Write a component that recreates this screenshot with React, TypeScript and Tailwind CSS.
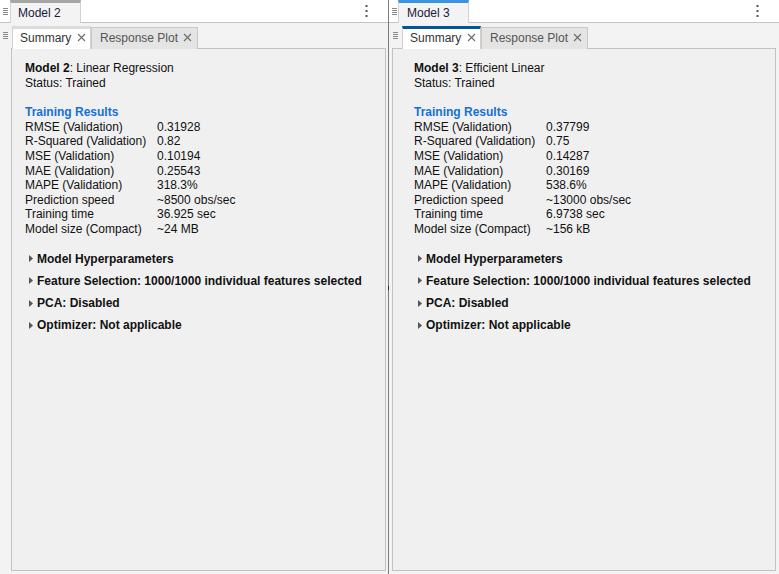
import React from 'react';

interface Pane {
  model: string;
  kind: string;
  rows: [string, string][];
  active: boolean;
}

const panes: Pane[] = [
  {
    model: 'Model 2',
    kind: 'Linear Regression',
    active: false,
    rows: [
      ['RMSE (Validation)', '0.31928'],
      ['R-Squared (Validation)', '0.82'],
      ['MSE (Validation)', '0.10194'],
      ['MAE (Validation)', '0.25543'],
      ['MAPE (Validation)', '318.3%'],
      ['Prediction speed', '~8500 obs/sec'],
      ['Training time', '36.925 sec'],
      ['Model size (Compact)', '~24 MB'],
    ],
  },
  {
    model: 'Model 3',
    kind: 'Efficient Linear',
    active: true,
    rows: [
      ['RMSE (Validation)', '0.37799'],
      ['R-Squared (Validation)', '0.75'],
      ['MSE (Validation)', '0.14287'],
      ['MAE (Validation)', '0.30169'],
      ['MAPE (Validation)', '538.6%'],
      ['Prediction speed', '~13000 obs/sec'],
      ['Training time', '6.9738 sec'],
      ['Model size (Compact)', '~156 kB'],
    ],
  },
];

const sections = [
  'Model Hyperparameters',
  'Feature Selection: 1000/1000 individual features selected',
  'PCA: Disabled',
  'Optimizer: Not applicable',
];

function Grip() {
  return (
    <svg width="5" height="7" viewBox="0 0 5 7" className="shrink-0">
      <rect x="0" y="0" width="5" height="1" fill="#8a8a8a" />
      <rect x="0" y="2" width="5" height="1" fill="#8a8a8a" />
      <rect x="0" y="4" width="5" height="1" fill="#8a8a8a" />
      <rect x="0" y="6" width="5" height="1" fill="#8a8a8a" />
    </svg>
  );
}

function Kebab() {
  return (
    <svg width="3" height="12" viewBox="0 0 3 12">
      <rect x="0.5" y="0" width="2" height="2" fill="#555" />
      <rect x="0.5" y="5" width="2" height="2" fill="#555" />
      <rect x="0.5" y="10" width="2" height="2" fill="#555" />
    </svg>
  );
}

function Close() {
  return (
    <svg width="9" height="9" viewBox="0 0 9 9" className="shrink-0">
      <path d="M1 1 L8 8 M8 1 L1 8" stroke="#6b6b6b" strokeWidth="1.1" />
    </svg>
  );
}

function Caret() {
  return (
    <svg width="4" height="7" viewBox="0 0 4 7" className="shrink-0">
      <path d="M0 0 L4 3.5 L0 7 Z" fill="#555" />
    </svg>
  );
}

function ModelPane({ pane }: { pane: Pane }) {
  const left = !pane.active;
  return (
    <div className={`flex flex-col h-full ${left ? 'w-[388px]' : 'flex-1'}`}>
      {/* document tab strip */}
      <div className="h-[23px] bg-white border-b border-[#c4c4c4] flex items-end relative shrink-0">
        <div className="absolute top-[8px] left-[3px]">
          <Grip />
        </div>
        <div
          className={`h-[23px] -mb-px bg-[#f3f3f3] border-x border-[#d2d2d2] border-t-[3px] flex items-center text-[12px] text-[#1a1a40] ${
            pane.active ? 'ml-[9px] w-[71px] pl-[8px] border-t-[#3b94e0]' : 'ml-[10px] w-[71px] pl-[7px] border-t-[#a6a6a6]'
          }`}
        >
          {pane.model}
        </div>
        <div className="absolute top-[5px] right-[20px]">
          <Kebab />
        </div>
      </div>

      <div className="flex-1 bg-[#f3f3f3] flex flex-col">
        {/* sub tabs */}
        <div className={`h-[25px] flex items-end relative shrink-0 ${left ? 'pl-[12px]' : 'pl-[13px]'}`}>
          <div className={`absolute top-[9px] ${left ? 'left-[3px]' : 'left-[4px]'}`}>
            <Grip />
          </div>
          <div
            className={`h-[23px] w-[79px] -mb-px z-10 bg-white border-x border-[#d0d0d0] border-t-[3px] flex items-center gap-[6px] pl-[7px] pb-[3px] text-[12px] text-[#333] ${
              pane.active ? 'border-t-[#00569b]' : 'border-t-[#dcdcdc]'
            }`}
          >
            Summary
            <Close />
          </div>
          <div className="h-[22px] w-[107px] -mb-px bg-[#e4e4e4] border border-[#c8c8c8] border-b-0 flex items-center gap-[5px] pl-[8px] pb-[2px] text-[12px] text-[#555]">
            Response Plot
            <Close />
          </div>
        </div>

        {/* summary body */}
        <div
          className={`flex-1 mb-[3px] bg-[#f0f0f0] border border-[#c2c2c2] pt-[12px] text-[12px] leading-[14.6px] text-[#111] ${
            left ? 'ml-[11px] mr-[2px] pl-[13px]' : 'ml-[3px] mr-[3px] pl-[21px]'
          }`}
        >
          <div>
            <span className="font-bold">{pane.model}</span>: {pane.kind}
          </div>
          <div>Status: Trained</div>
          <div className="mt-[15px] font-bold text-[#1470d6]">Training Results</div>
          {pane.rows.map(([k, v]) => (
            <div key={k} className="flex">
              <span className="w-[132px] shrink-0">{k}</span>
              <span>{v}</span>
            </div>
          ))}
          <div className="mt-[15px] flex flex-col gap-[7.5px] pl-[4px]">
            {sections.map((s) => (
              <div key={s} className="flex items-center gap-[4px] font-bold text-[#111]">
                <Caret />
                {s}
              </div>
            ))}
          </div>
        </div>
      </div>
    </div>
  );
}

export default function App() {
  return (
    <div
      className="w-[779px] h-[574px] flex bg-white overflow-hidden"
      style={{ fontFamily: '"Liberation Sans", Arial, sans-serif' }}
    >
      <ModelPane pane={panes[0]} />
      <div className="w-px bg-[#7c7c7c] relative">
        <div className="absolute left-0 top-[286px] w-px h-[4px] bg-[#222]" />
      </div>
      <ModelPane pane={panes[1]} />
    </div>
  );
}
